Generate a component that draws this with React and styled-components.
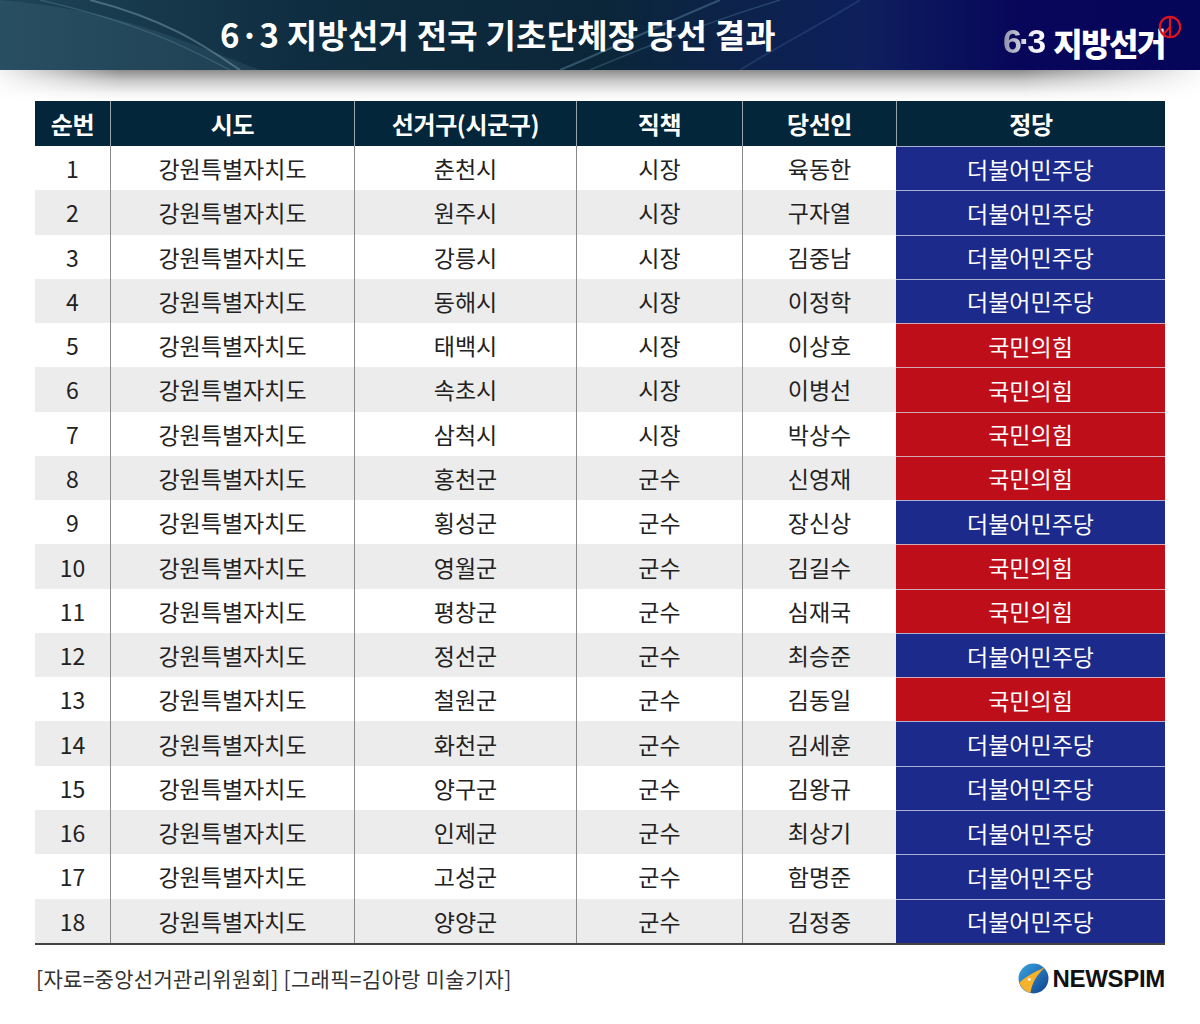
import React from 'react';
import styled, { createGlobalStyle } from 'styled-components';

const GlobalStyle = createGlobalStyle`
  body {
    margin: 0;
    background: #fff;
    font-family: "Noto Sans CJK KR", "Noto Sans", sans-serif;
  }
`;

const rows = [
  ['춘천시', '시장', '육동한', 'dem'],
  ['원주시', '시장', '구자열', 'dem'],
  ['강릉시', '시장', '김중남', 'dem'],
  ['동해시', '시장', '이정학', 'dem'],
  ['태백시', '시장', '이상호', 'ppp'],
  ['속초시', '시장', '이병선', 'ppp'],
  ['삼척시', '시장', '박상수', 'ppp'],
  ['홍천군', '군수', '신영재', 'ppp'],
  ['횡성군', '군수', '장신상', 'dem'],
  ['영월군', '군수', '김길수', 'ppp'],
  ['평창군', '군수', '심재국', 'ppp'],
  ['정선군', '군수', '최승준', 'dem'],
  ['철원군', '군수', '김동일', 'ppp'],
  ['화천군', '군수', '김세훈', 'dem'],
  ['양구군', '군수', '김왕규', 'dem'],
  ['인제군', '군수', '최상기', 'dem'],
  ['고성군', '군수', '함명준', 'dem'],
  ['양양군', '군수', '김정중', 'dem'],
];

const parties = {
  dem: { name: '더불어민주당', color: '#1b2a8b' },
  ppp: { name: '국민의힘', color: '#bd0e19' },
};

const Page = styled.div`
  width: 1200px;
  height: 1024px;
  position: relative;
  overflow: hidden;
`;

const TopBar = styled.header`
  height: 70px;
  position: relative;
  display: flex;
  align-items: center;
  background: linear-gradient(90deg, #1f4457 0%, #0f2d40 25%, #0b2638 50%, #0e1f5c 72%, #07065a 85%, #05055a 100%);
  overflow: hidden;
`;

const Swoosh = styled.svg`
  position: absolute;
  left: 0;
  top: 0;
  pointer-events: none;
`;

const Title = styled.h1`
  position: relative;
  margin: 0 0 0 220px;
  color: #fff;
  font-size: 33px;
  font-weight: 700;
  letter-spacing: 0.2px;
  line-height: 1;
  padding-bottom: 2px;
`;

const Logo = styled.div`
  position: relative;
  margin-left: auto;
  margin-right: 35px;
  display: flex;
  align-items: flex-end;
  padding-top: 12px;
`;

const LogoNum = styled.span`
  font-family: "Liberation Sans", Arial, sans-serif;
  font-weight: 700;
  font-size: 34px;
  line-height: 1;
  letter-spacing: -3px;
  background: linear-gradient(90deg, #8c8faa 0%, #e6e7ef 60%, #ffffff 100%);
  -webkit-background-clip: text;
  background-clip: text;
  color: transparent;
  margin-right: 7px;
  padding-right: 3px;
`;

const LogoText = styled.span`
  color: #fff;
  font-weight: 900;
  font-size: 32px;
  letter-spacing: -1.5px;
  line-height: 1;
`;

const Stamp = styled.svg`
  position: absolute;
  right: -17px;
  top: 3px;
`;

const Shade = styled.div`
  height: 31px;
  background:
    linear-gradient(90deg, rgba(255,255,255,0.9) 0%, rgba(255,255,255,0) 10%, rgba(255,255,255,0) 85%, rgba(255,255,255,0.95) 100%),
    linear-gradient(180deg, #8c8c8c 0%, #c9c9c9 35%, #f3f3f3 75%, #ffffff 100%);
`;

const Table = styled.div`
  margin-left: 35px;
  width: 1130px;
  border-bottom: 2px solid #444;
`;

const Row = styled.div`
  display: grid;
  grid-template-columns: 75px 244px 222px 166px 154px 269px;
  height: ${p => (p.$head ? '45px' : '44.28px')};
  background: ${p => (p.$head ? '#04263a' : p.$alt ? '#ececec' : '#fff')};
`;

const HeadCell = styled.div`
  display: flex;
  align-items: center;
  justify-content: center;
  color: #fff;
  font-size: 24px;
  font-weight: 700;
  letter-spacing: -0.4px;
  border-left: ${p => (p.$first ? 'none' : '1px solid #9aa3aa')};
`;

const Cell = styled.div`
  display: flex;
  align-items: center;
  justify-content: center;
  color: #222;
  font-size: 23px;
  letter-spacing: 0;
  border-left: ${p => (p.$first ? 'none' : '1px solid #8a8a8a')};
`;

const PartyCell = styled.div`
  display: flex;
  align-items: center;
  justify-content: center;
  color: #fff;
  font-size: 23px;
  letter-spacing: 0;
  background: ${p => p.$color};
  border-top: 1px solid rgba(220, 220, 235, 0.75);
  box-sizing: border-box;
`;

const Footer = styled.footer`
  margin: 0 35px 0 36px;
  height: 66px;
  display: flex;
  align-items: center;
  justify-content: space-between;
`;

const Source = styled.p`
  margin: 0;
  color: #333;
  font-size: 21px;
  letter-spacing: 0.3px;
`;

const Brand = styled.div`
  display: flex;
  align-items: center;
  gap: 3px;
  padding-top: 2px;
`;

const BrandName = styled.span`
  font-family: "Liberation Sans", Arial, sans-serif;
  font-weight: 700;
  font-size: 24px;
  color: #111;
  letter-spacing: -0.3px;
`;

function NewspimMark() {
  return (
    <svg width="31" height="31" viewBox="0 0 30 30">
      <defs>
        <linearGradient id="nsb" x1="0" y1="0" x2="1" y2="1">
          <stop offset="0" stopColor="#3aa6e0" />
          <stop offset="1" stopColor="#0d3f8f" />
        </linearGradient>
      </defs>
      <circle cx="15" cy="15" r="14.5" fill="url(#nsb)" />
      <path d="M1.5 19 C6 14 13 10 26 4 C18 12 14 18 12 29 C8 28 3 24 1.5 19 Z" fill="#f5b22a" />
      <circle cx="11" cy="16" r="1.4" fill="#fff" />
    </svg>
  );
}

export default function App() {
  return (
    <Page>
      <GlobalStyle />
      <TopBar>
        <Swoosh width="1200" height="70" viewBox="0 0 1200 70">
          <path d="M0 0 C120 10 180 40 260 70 L0 70 Z" fill="rgba(70,110,130,0.25)" />
          <path d="M90 0 C170 20 210 50 240 70" stroke="rgba(160,200,215,0.35)" strokeWidth="2" fill="none" />
          <path d="M40 0 C150 25 200 55 230 70" stroke="rgba(120,170,190,0.25)" strokeWidth="1.5" fill="none" />
          <path d="M560 70 C620 45 660 25 720 0" stroke="rgba(120,170,200,0.35)" strokeWidth="2" fill="none" />
          <path d="M590 70 C650 45 700 25 780 0" stroke="rgba(120,170,200,0.25)" strokeWidth="1.5" fill="none" />
          <path d="M740 70 C780 45 820 25 860 0" stroke="rgba(100,140,200,0.2)" strokeWidth="2" fill="none" />
        </Swoosh>
        <Title>6·3 지방선거 전국 기초단체장 당선 결과</Title>
        <Logo>
          <LogoNum>6·3</LogoNum>
          <LogoText>지방선거</LogoText>
          <Stamp width="24" height="24" viewBox="0 0 22 22">
            <circle cx="11" cy="11" r="9.3" fill="none" stroke="#e0141e" strokeWidth="2" />
            <line x1="11" y1="2" x2="11" y2="20" stroke="#e0141e" strokeWidth="2" />
            <line x1="11" y1="11" x2="5" y2="17.5" stroke="#e0141e" strokeWidth="2" />
          </Stamp>
        </Logo>
      </TopBar>
      <Shade />
      <Table>
        <Row $head>
          <HeadCell $first>순번</HeadCell>
          <HeadCell>시도</HeadCell>
          <HeadCell>선거구(시군구)</HeadCell>
          <HeadCell>직책</HeadCell>
          <HeadCell>당선인</HeadCell>
          <HeadCell>정당</HeadCell>
        </Row>
        {rows.map(([district, role, name, party], i) => (
          <Row key={district} $alt={i % 2 === 1}>
            <Cell $first>{i + 1}</Cell>
            <Cell>강원특별자치도</Cell>
            <Cell>{district}</Cell>
            <Cell>{role}</Cell>
            <Cell>{name}</Cell>
            <PartyCell $color={parties[party].color}>{parties[party].name}</PartyCell>
          </Row>
        ))}
      </Table>
      <Footer>
        <Source>[자료=중앙선거관리위원회] [그래픽=김아랑 미술기자]</Source>
        <Brand>
          <NewspimMark />
          <BrandName>NEWSPIM</BrandName>
        </Brand>
      </Footer>
    </Page>
  );
}
